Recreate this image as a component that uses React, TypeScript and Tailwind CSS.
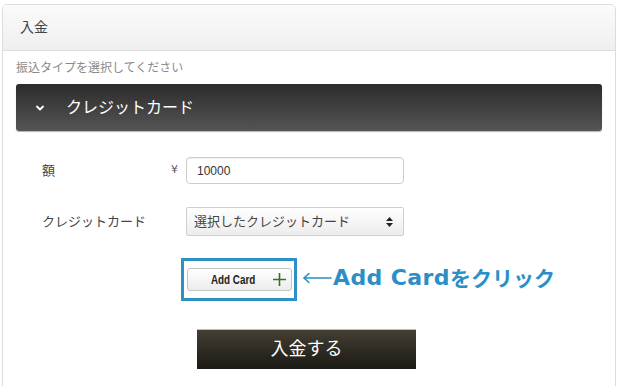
const jp = "font-['Liberation_Sans','Noto_Sans_CJK_JP',sans-serif]";

export default function App() {
    return (
        <div className={`w-[620px] h-[386px] overflow-hidden bg-white pt-[4px] pl-[2px] ${jp}`}>
            <div className="w-[614px] h-[400px] border border-[#dcdcdc] rounded-[5px] overflow-hidden">
                {/* Header */}
                <div className="h-[46px] flex items-center pl-[17px] bg-gradient-to-b from-[#fbfbfb] to-[#efefef] border-b border-[#dddddd] text-[14px] text-[#444]">
                    入金
                </div>

                <div className="px-[13px]">
                    <p className="pt-[9px] text-[12px] leading-[16px] text-[#8a8a8a]">振込タイプを選択してください</p>

                    {/* Payment type */}
                    <div className="mt-[8px] h-[47px] rounded-[3px] bg-gradient-to-b from-[#2c2c2c] to-[#555555] flex items-center shadow-[0_1px_1px_rgba(0,0,0,0.3)]">
                        <svg className="ml-[19px] w-[10px] h-[10px]" viewBox="0 0 10 10" fill="none" stroke="#fff" strokeWidth={1.8} strokeLinecap="round" strokeLinejoin="round">
                            <path d="M2 3.5l3 3 3-3" />
                        </svg>
                        <span className="ml-[21px] text-[16px] text-white">クレジットカード</span>
                    </div>

                    {/* Form */}
                    <div className="mt-[26px] flex flex-col">
                        <div className="flex items-center h-[27px]">
                            <span className="w-[155px] shrink-0 pl-[26px] text-[13px] text-[#444]">額</span>
                            <span className="w-[15px] shrink-0 text-[11px] text-[#555] font-['DejaVu_Sans',sans-serif]">¥</span>
                            <div className="w-[218px] h-[27px] border border-[#cccccc] rounded-[4px] flex items-center pl-[10px] text-[12px] text-[#333] shadow-[inset_0_1px_1px_rgba(0,0,0,0.06)]">
                                10000
                            </div>
                        </div>

                        <div className="mt-[23px] flex items-center h-[29px]">
                            <span className="w-[170px] shrink-0 pl-[26px] text-[13px] text-[#444]">クレジットカード</span>
                            <div className="w-[218px] h-[29px] border border-[#cfcfcf] rounded-[2px] bg-gradient-to-b from-[#ffffff] to-[#ececec] flex items-center pl-[7px] pr-[10px] text-[13px] text-[#444]">
                                <span className="flex-1">選択したクレジットカード</span>
                                <svg className="w-[7px] h-[10px]" viewBox="0 0 7 10" fill="#222">
                                    <path d="M3.5 0L7 4H0z M3.5 10L0 6h7z" />
                                </svg>
                            </div>
                        </div>

                        {/* Add card annotation */}
                        <div className="mt-[22px] flex items-center">
                            <div className="ml-[165px] w-[116px] h-[43px] border-[3px] border-[#2e90c4] flex items-center justify-center">
                                <div className="w-[105px] h-[23px] mt-[-1px] border border-[#c4c4c4] rounded-[3px] bg-gradient-to-b from-white to-[#ececec] flex items-center pl-[23px] pr-[4px]">
                                    <span className="flex-1">
                                        <span className="inline-block origin-left scale-x-[0.82] text-[12px] text-[#222] font-bold">Add Card</span>
                                    </span>
                                    <svg className="w-[15px] h-[15px]" viewBox="0 0 15 15" stroke="#2c7a1f" strokeWidth={1.6}>
                                        <path d="M7.5 1v13M1 7.5h13" />
                                    </svg>
                                </div>
                            </div>
                            <div className="ml-[5px] mt-[-4px] flex items-center text-[#2b8fc6]">
                                <svg className="w-[30px] h-[12px]" viewBox="0 0 30 12" fill="none" stroke="#2b8fc6" strokeWidth={1.6} strokeLinecap="round">
                                    <path d="M2 6h27M7 1.5L2 6l5 4.5" />
                                </svg>
                                <span className="ml-[1px] text-[22px] font-bold font-['DejaVu_Sans',sans-serif] tracking-[0.4px]">Add Card</span>
                                <span className="text-[21px] font-bold font-['Noto_Sans_CJK_JP',sans-serif]">をクリック</span>
                            </div>
                        </div>

                        {/* Submit */}
                        <button className="mt-[28px] ml-[181px] w-[219px] h-[40px] bg-gradient-to-b from-[#433f33] to-[#1c1a15] border-t border-[#bdbdbd] text-white text-[18px] flex items-center justify-center">
                            入金する
                        </button>
                    </div>
                </div>
            </div>
        </div>
    );
}
